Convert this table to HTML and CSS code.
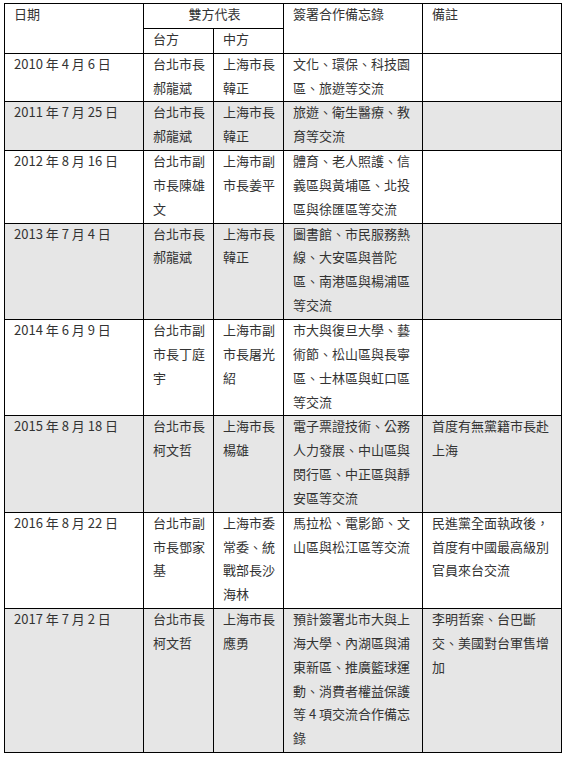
FILE: index.html
```html
<!DOCTYPE html>
<html lang="zh-Hant">
<head>
<meta charset="utf-8">
<title>雙方代表</title>
<link rel="stylesheet" href="styles.css">
</head>
<body>
<table class="memo">
  <colgroup>
    <col class="c-date">
    <col class="c-tw">
    <col class="c-cn">
    <col class="c-memo">
    <col class="c-note">
  </colgroup>
  <thead>
    <tr>
      <th rowspan="2">日期</th>
      <th colspan="2" class="center">雙方代表</th>
      <th rowspan="2">簽署合作備忘錄</th>
      <th rowspan="2">備註</th>
    </tr>
    <tr>
      <th>台方</th>
      <th>中方</th>
    </tr>
  </thead>
  <tbody>
    <tr>
      <td>2010 年 4 月 6 日</td>
      <td>台北市長郝龍斌</td>
      <td>上海市長韓正</td>
      <td>文化、環保、科技園區、旅遊等交流</td>
      <td></td>
    </tr>
    <tr class="alt">
      <td>2011 年 7 月 25 日</td>
      <td>台北市長郝龍斌</td>
      <td>上海市長韓正</td>
      <td>旅遊、衛生醫療、教育等交流</td>
      <td></td>
    </tr>
    <tr>
      <td>2012 年 8 月 16 日</td>
      <td>台北市副市長陳雄文</td>
      <td>上海市副市長姜平</td>
      <td>體育、老人照護、信義區與黃埔區、北投區與徐匯區等交流</td>
      <td></td>
    </tr>
    <tr class="alt">
      <td>2013 年 7 月 4 日</td>
      <td>台北市長郝龍斌</td>
      <td>上海市長韓正</td>
      <td>圖書館、市民服務熱線、大安區與普陀區、南港區與楊浦區等交流</td>
      <td></td>
    </tr>
    <tr>
      <td>2014 年 6 月 9 日</td>
      <td>台北市副市長丁庭宇</td>
      <td>上海市副市長屠光紹</td>
      <td>市大與復旦大學、藝術節、松山區與長寧區、士林區與虹口區等交流</td>
      <td></td>
    </tr>
    <tr class="alt">
      <td>2015 年 8 月 18 日</td>
      <td>台北市長柯文哲</td>
      <td>上海市長楊雄</td>
      <td>電子票證技術、公務人力發展、中山區與閔行區、中正區與靜安區等交流</td>
      <td>首度有無黨籍市長赴上海</td>
    </tr>
    <tr>
      <td>2016 年 8 月 22 日</td>
      <td>台北市副市長鄧家基</td>
      <td>上海市委常委、統戰部長沙海林</td>
      <td>馬拉松、電影節、文山區與松江區等交流</td>
      <td>民進黨全面執政後，首度有中國最高級別官員來台交流</td>
    </tr>
    <tr class="alt">
      <td>2017 年 7 月 2 日</td>
      <td>台北市長柯文哲</td>
      <td>上海市長應勇</td>
      <td>預計簽署北市大與上海大學、內湖區與浦東新區、推廣籃球運動、消費者權益保護等 4 項交流合作備忘錄</td>
      <td>李明哲案、台巴斷交、美國對台軍售增加</td>
    </tr>
  </tbody>
</table>
</body>
</html>
```

FILE: styles.css
```css
html, body {
  margin: 0;
  padding: 0;
  background: #fff;
}

body {
  padding: 3px 0 0 4px;
}

.memo {
  border-collapse: collapse;
  table-layout: fixed;
  width: 557px;
  font-family: "Noto Sans CJK TC", sans-serif;
  font-size: 13px;
  line-height: 23.85px;
  color: #333;
}

.c-date { width: 139px; }
.c-tw { width: 70px; }
.c-cn { width: 70px; }
.c-memo { width: 139px; }
.c-note { width: 139px; }

.memo th,
.memo td {
  border: 1px solid #000;
  padding: 0 7px 2px 9px;
  text-align: left;
  vertical-align: top;
  font-weight: normal;
  word-break: break-all;
}

/* lifts the first text line slightly within each cell */
.memo th::before,
.memo td::before {
  content: "";
  display: block;
  margin-top: -2px;
}

.memo th.center {
  text-align: center;
}

.memo tr.alt td {
  background: #e6e6e6;
}
```
